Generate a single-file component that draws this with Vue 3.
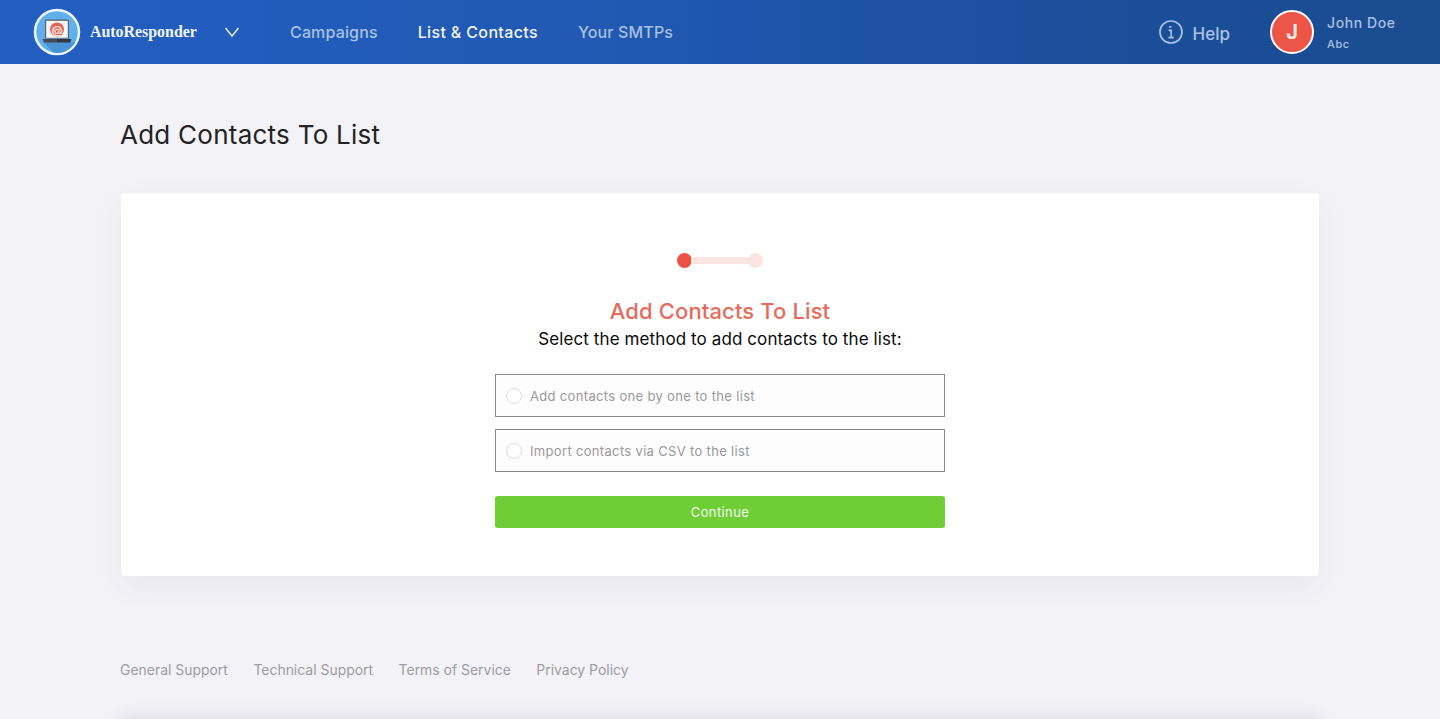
<script setup>
const links = [
  { label: 'Campaigns', active: false },
  { label: 'List & Contacts', active: true },
  { label: 'Your SMTPs', active: false },
]
const options = ['Add contacts one by one to the list', 'Import contacts via CSV to the list']
const footer = ['General Support', 'Technical Support', 'Terms of Service', 'Privacy Policy']
</script>

<template>
  <div class="page">
    <header class="topbar">
      <div class="brand">
        <svg class="logo" width="48" height="48" viewBox="0 0 48 48">
          <defs><clipPath id="lc"><circle cx="24" cy="24" r="21" /></clipPath></defs>
          <circle cx="24" cy="24" r="22" fill="#5fb0ec" stroke="#eef6fc" stroke-width="2.5" />
          <g clip-path="url(#lc)">
            <path d="M10 34 L30 54 L50 54 L50 34 L38 34 L36 30 Z" fill="#4a94d6" />
          </g>
          <rect x="12" y="11.5" width="24" height="19" rx="1" fill="#5b6068" />
          <rect x="13.2" y="12.8" width="21.6" height="17" fill="#f4f6f8" />
          <circle cx="24" cy="21.5" r="7" fill="#ea6352" />
          <text x="24" y="25.6" text-anchor="middle" class="at">@</text>
          <path d="M9.5 31h14.5v3.4H11z" fill="#454a52" />
          <path d="M24 31h14.5L37 34.4H24z" fill="#33373e" />
        </svg>
        <span class="brand-name">AutoResponder</span>
        <svg class="chev" width="16" height="12" viewBox="0 0 16 12">
          <path d="M1.5 2 L8 10 L14.5 2" fill="none" stroke="#e3ecf8" stroke-width="1.5" />
        </svg>
      </div>
      <nav class="nav">
        <a v-for="l in links" :key="l.label" class="nav-link" :class="{ active: l.active }">{{ l.label }}</a>
      </nav>
      <div class="right">
        <div class="help">
          <svg width="24" height="24" viewBox="0 0 24 24">
            <circle cx="12" cy="12" r="11" fill="none" stroke="#a9c1e4" stroke-width="1.7" />
            <path d="M10 6.9h2.4M9.6 10.4h2.6v7M9.4 17.6h5.4" fill="none" stroke="#a9c1e4" stroke-width="1.6" />
          </svg>
          <span class="help-text">Help</span>
        </div>
        <div class="user">
          <div class="avatar">J</div>
          <div class="who">
            <div class="name">John Doe</div>
            <div class="org">Abc</div>
          </div>
        </div>
      </div>
    </header>

    <main class="main">
      <h1 class="title">Add Contacts To List</h1>
      <section class="card">
        <div class="steps">
          <span class="dot on"></span>
          <span class="bar"></span>
          <span class="dot"></span>
        </div>
        <h2 class="sub">Add Contacts To List</h2>
        <p class="lead">Select the method to add contacts to the list:</p>
        <div class="form">
          <label v-for="o in options" :key="o" class="opt">
            <span class="radio"></span>
            <span>{{ o }}</span>
          </label>
          <button class="go" type="button">Continue</button>
        </div>
      </section>
      <footer class="foot">
        <a v-for="f in footer" :key="f">{{ f }}</a>
      </footer>
      <div class="below"></div>
    </main>
  </div>
</template>

<style>
html, body { margin: 0; height: 100%; overflow: hidden; background: #f3f2f7; }
</style>

<style scoped>
.page {
  height: 719px;
  overflow: hidden;
  background: #f3f2f7;
  font-family: Inter, "Liberation Sans", sans-serif;
}
.topbar {
  height: 64px;
  display: flex;
  align-items: center;
  padding: 0 0 0 33px;
  background: linear-gradient(90deg, #235fc2 0%, #2159b4 40%, #1b4f9b 75%, #1a4c90 100%);
}
.brand { display: flex; align-items: center; width: 257px; }
.logo { flex: none; }
.at {
  font: 700 11px Inter, sans-serif;
  fill: #fbe3df;
}
.brand-name {
  margin-left: 9px;
  font: 700 15.9px "Liberation Serif", serif;
  color: #f2f6fc;
}
.chev { margin-left: 27px; }
.nav { display: flex; gap: 40px; }
.nav-link { font-size: 16px; font-weight: 500; letter-spacing: 0.15px; color: #a9c1e4; }
.nav-link.active { color: #f2f6fc; letter-spacing: 0.35px; }
.right { margin-left: auto; display: flex; align-items: center; }
.help {
  display: flex; align-items: center; gap: 10px;
  font-size: 17px; font-weight: 500; color: #a9c1e4;
  margin-right: 40px;
}
.help-text { margin-top: 4px; }
.user { display: flex; align-items: center; gap: 13px; width: 170px; }
.avatar {
  width: 40px; height: 40px;
  border: 2px solid #fff;
  border-radius: 50%;
  background: #ec5548;
  color: #fbe9e6;
  font-size: 20px; font-weight: 700;
  display: flex; align-items: center; justify-content: center;
}
.name { font-size: 14px; font-weight: 500; letter-spacing: 0.6px; color: #a9c1e4; line-height: 18px; }
.org { font-size: 11px; font-weight: 500; letter-spacing: 0.6px; color: #a9c1e4; line-height: 14px; margin-top: 5px; }
.main { width: 1200px; margin: 0 auto; }
.title {
  margin: 0; padding-top: 54px;
  height: 75px;
  font-size: 26px; font-weight: 400; line-height: 33px;
  letter-spacing: 0.25px;
  color: #232326;
}
.card {
  box-sizing: border-box;
  height: 383px;
  margin: 0 1px;
  background: #fff;
  border-radius: 4px;
  box-shadow: 0 10px 30px rgba(60, 60, 90, 0.06);
  display: flex; flex-direction: column; align-items: center;
  padding-top: 60px;
}
.steps { display: flex; align-items: center; height: 15px; }
.dot { width: 15px; height: 15px; border-radius: 50%; background: #fbe4e2; }
.dot.on { background: #ec5145; }
.bar { width: 58px; height: 7px; background: #fbe4e2; margin: 0 -1px; }
.sub {
  margin: 29px 0 0;
  font-size: 22px; font-weight: 450; line-height: 28px;
  letter-spacing: 0.12px;
  color: #e96a5a;
}
.lead {
  margin: 0;
  font-size: 17px; line-height: 28px;
  letter-spacing: 0.1px;
  color: #0a0a0a;
}
.form { width: 450px; margin-top: 21px; display: flex; flex-direction: column; gap: 12px; }
.opt {
  box-sizing: border-box;
  height: 43px;
  display: flex; align-items: center; gap: 8px;
  padding-left: 10px;
  border: 1px solid #8a8a8a;
  background: #fdfdfd;
  font-size: 13px;
  letter-spacing: 0.33px;
  color: #999;
}
.radio {
  box-sizing: border-box;
  width: 16px; height: 16px;
  border: 1px solid #ddd; border-radius: 50%;
  background: #fff;
}
.go {
  height: 32px; margin-top: 12px;
  border: 0; border-radius: 3px;
  background: #6fcd36;
  color: #f3fbee;
  font: 400 13px Inter, sans-serif;
  letter-spacing: 0.4px;
}
.foot {
  display: flex; gap: 25.5px;
  margin-top: 85px;
  font-size: 13.95px; line-height: 18px;
  color: #9d9da3;
}
.below {
  height: 60px; margin-top: 40px;
  background: #e7e7ea;
  border-radius: 6px;
  box-shadow: 0 -2px 16px 2px rgba(40, 40, 50, 0.09);
}
</style>
